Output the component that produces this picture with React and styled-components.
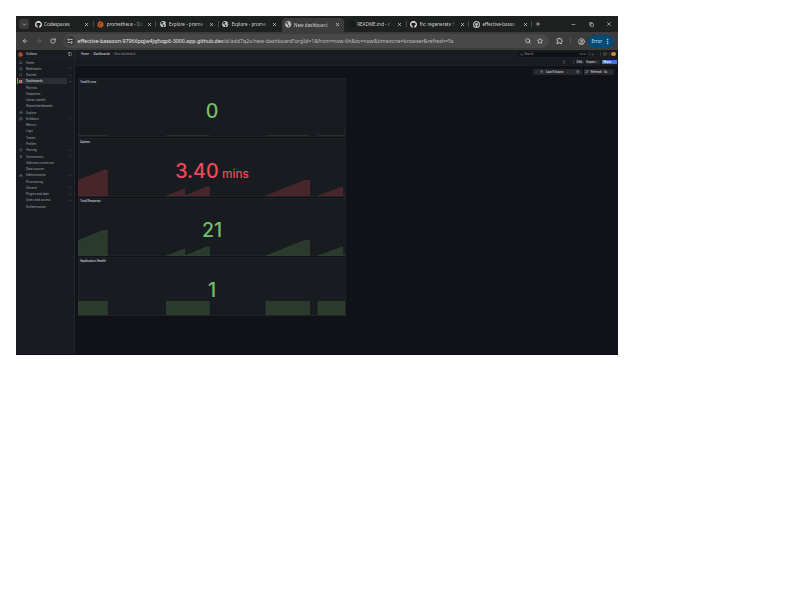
import React from 'react';
import styled, { createGlobalStyle } from 'styled-components';
import {
  ChevronDown, ChevronRight, ChevronLeft, ChevronUp, X, Plus, Minus, Copy, ArrowLeft, ArrowRight, RotateCw,
  Search, Star, CircleUser, EllipsisVertical, House, Bookmark, LayoutGrid, Compass,
  Bell, Settings, Plug, Clock, ZoomOut, RefreshCw, PanelLeft, Layers, CircleHelp,
} from 'lucide-react';
import { FaGithub, FaGlobeAmericas } from 'react-icons/fa';
import { MdOutlineExtension } from 'react-icons/md';

const Global = createGlobalStyle`
  * { box-sizing: border-box; }
  body { margin: 0; background: #fff; }
  svg { flex: none; display: block; }
`;

const Window = styled.div`
  width: 602px;
  height: 339px;
  margin: 16px;
  display: flex;
  flex-direction: column;
  background: #111217;
  overflow: hidden;
  font-family: Inter, sans-serif;
`;

/* Browser chrome */
const TabStrip = styled.div`
  height: 16px;
  flex: none;
  display: flex;
  align-items: center;
  background: #1f2120;
  color: #d4d4d4;
  font: 4.6px/8px "Noto Sans", sans-serif;
`;
const TabMenu = styled.div`
  width: 10px;
  height: 10px;
  margin: 0 2px 0 3px;
  border-radius: 3px;
  background: #3a3b3a;
  display: grid;
  place-items: center;
`;
const Tab = styled.div`
  width: 62.65px;
  height: ${(p) => (p.$active ? 14 : 12)}px;
  align-self: ${(p) => (p.$active ? 'flex-end' : 'center')};
  padding: 0 4.5px ${(p) => (p.$active ? 1 : 0)}px 3.5px;
  display: flex;
  align-items: center;
  gap: 2.5px;
  flex: none;
  border-radius: 4px 4px 0 0;
  background: ${(p) => (p.$active ? '#3c3c3c' : 'transparent')};
`;
const TabTitle = styled.span`
  flex: 1;
  min-width: 0;
  overflow: hidden;
  white-space: nowrap;
  mask-image: linear-gradient(90deg, #000 75%, transparent);
`;
const TabDivider = styled.i`
  width: 1px;
  height: 6px;
  margin: 0 0 0 -1px;
  flex: none;
  background: ${(p) => (p.$off ? 'transparent' : '#484948')};
`;
const NewTab = styled.div`
  margin-left: 2.5px;
`;
const RingIcon = styled.span`
  width: 7px;
  height: 7px;
  flex: none;
  border-radius: 50%;
  background: #b9bbbd;
  display: grid;
  place-items: center;
`;
const Controls = styled.div`
  margin-left: auto;
  padding-right: 6px;
  display: flex;
  align-items: center;
  gap: 12.5px;
`;
const Toolbar = styled.div`
  height: 18px;
  flex: none;
  padding: 0 4px 0 5.5px;
  display: flex;
  align-items: center;
  background: #3c3c3c;
  color: #d8d8d8;
`;
const NavIcons = styled.div`
  width: 41px;
  display: flex;
  gap: 8px;
`;
const Address = styled.div`
  width: 486.5px;
  height: 14px;
  padding: 0 6px 0 2px;
  border-radius: 7px;
  background: #484848;
  display: flex;
  align-items: center;
  gap: 6.5px;
`;
const SiteInfo = styled.div`
  width: 10px;
  height: 10px;
  margin-right: -3.5px;
  border-radius: 5px;
  background: #3a3a3a;
  display: grid;
  place-items: center;
`;
const Url = styled.span`
  flex: 1;
  white-space: nowrap;
  color: #bcbcbc;
  font: 5.26px/10px "Noto Sans", sans-serif;
  b { font-weight: 400; color: #ececec; }
`;
const BarEnd = styled.div`
  margin-left: auto;
  display: flex;
  align-items: center;
  gap: 6.5px;
`;
const BarDivider = styled.i`
  width: 1px;
  height: 6px;
  background: #5a5a5a;
`;
const ErrorChip = styled.div`
  height: 13px;
  width: 26px;
  margin-left: -3px;
  border-radius: 7px;
  background: #044a77;
  color: #c2e2f7;
  display: flex;
  align-items: center;
  justify-content: center;
  gap: 1.5px;
  font: 4.5px/8px "Noto Sans", sans-serif;
`;

/* Grafana */
const Workspace = styled.div`
  flex: 1;
  min-height: 0;
  display: flex;
  border-bottom: 1px solid #1a0a16;
`;
const Sidebar = styled.nav`
  width: 59px;
  flex: none;
  background: #181b1f;
  border-right: 1px solid #24262b;
  color: #a8a9af;
  font-size: 2.9px;
`;
const Brand = styled.div`
  height: 8px;
  padding: 0.2px 2px 0;
  display: flex;
  align-items: center;
  gap: 3px;
  box-shadow: inset 0 -0.5px #25272c;
  color: #d0d1d6;
`;
const NavList = styled.div`
  padding-top: 1.4px;
`;
const NavItem = styled.div`
  height: 6.28px;
  width: ${(p) => (p.$active ? 57 : 58)}px;
  margin-left: ${(p) => (p.$active ? 1 : 0)}px;
  padding-left: ${(p) => (p.$active ? 1 : 3)}px;
  border-left: ${(p) => (p.$active ? '1px solid #f0603c' : '0 solid transparent')};
  display: flex;
  align-items: center;
  background: ${(p) => (p.$active ? 'linear-gradient(90deg, #2c2e33 49px, transparent 49px)' : 'transparent')};
  color: ${(p) => (p.$active ? '#e0e0e4' : 'inherit')};
`;
const NavIcon = styled.span`
  width: 7px;
  flex: none;
  color: ${(p) => (p.$active ? '#fff' : '#a0a1a7')};
`;
const NavLabel = styled.span`
  width: ${(p) => (p.$brand ? 39.3 : 43.3)}px;
  flex: none;
  white-space: nowrap;
  line-height: 6px;
`;
const Main = styled.main`
  flex: 1;
  min-width: 0;
`;
const TopRow = styled.div`
  height: 8px;
  padding: 0.2px ${(p) => p.$right}px 0 6px;
  display: flex;
  align-items: center;
  background: #181b1f;
  box-shadow: inset 0 -0.6px #25272c;
  color: #909198;
  font-size: 2.8px;
`;
const Crumbs = styled.div`
  display: flex;
  align-items: center;
  gap: 1px;
  b { font-weight: 600; color: #c7c8ce; }
`;
const TopTools = styled.div`
  margin-left: auto;
  display: flex;
  align-items: center;
  gap: ${(p) => p.$gap}px;
`;
const SearchBox = styled.div`
  width: 68px;
  height: 5px;
  padding: 0 1px;
  background: #101116;
  display: flex;
  align-items: center;
  gap: 1px;
  span:last-child { margin-left: auto; font-size: 2.4px; }
`;
const Avatar = styled.i`
  width: 4.6px;
  height: 4.6px;
  border-radius: 3px;
  background: radial-gradient(#c98a4a 30%, #c9781c);
`;
const Divider = styled.i`
  width: 0.5px;
  height: 4px;
  margin-left: ${(p) => p.$gap || 0}px;
  background: #34363c;
`;
const Button = styled.div`
  width: ${(p) => p.$w}px;
  height: ${(p) => p.$h || 4.8}px;
  flex: none;
  display: flex;
  align-items: center;
  justify-content: space-evenly;
  white-space: nowrap;
  font-size: 2.9px;
  font-weight: 600;
  color: ${(p) => (p.$primary ? '#fff' : '#d0d1d8')};
  background: ${(p) => (p.$primary ? '#3d71d9' : '#25272c')};
`;
const TimeBar = styled.div`
  height: 12.4px;
  padding: 0 4.5px 0 0;
  display: flex;
  align-items: center;
  justify-content: flex-end;
  gap: 1.5px;
`;
const Panels = styled.div`
  width: 268px;
  margin-left: 3px;
  display: flex;
  flex-direction: column;
  gap: 1.2px;
`;
const Panel = styled.section`
  height: 58.5px;
  padding-bottom: 0.6px;
  display: grid;
  grid-template: 6px 1fr / 1fr;
  background: #181b1f;
  box-shadow: inset 0 0 0 0.6px #26282d;
  overflow: hidden;
`;
const PanelTitle = styled.h2`
  margin: 0;
  padding: 0.6px 0 0 2px;
  font-size: 2.9px;
  line-height: 6px;
  font-weight: 600;
  color: #ccccdc;
`;
const PanelBody = styled.div`
  display: grid;
  grid-template: 100% / 100%;
  > * { grid-area: 1 / 1; }
`;
const Spark = styled.svg`
  width: 267px;
  height: 27px;
  margin-left: 0.3px;
  align-self: end;
  fill: ${(p) => (p.$red ? '#46262b' : '#2a3a2d')};
  stroke: ${(p) => (p.$red ? '#64303a' : '#37503a')};
  stroke-width: 0.5;
`;
const Value = styled.div`
  z-index: 1;
  align-self: center;
  display: flex;
  align-items: baseline;
  justify-content: center;
  gap: 3.5px;
  font-size: 19.6px;
  line-height: 22px;
  font-weight: 500;
  padding-top: ${(p) => (p.$red ? 1.6 : 0.8)}px;
  color: ${(p) => (p.$red ? '#f2495c' : '#73bf69')};
  small { font-size: 11.7px; line-height: 12px; }
`;

const GrafanaMark = ({ size }) => (
  <svg width={size} height={size} viewBox="0 0 24 24">
    <path d="M12 1l3 3 4-1 1 4 3 3-2 3 1 5-4 1-3 4-4-2-5 1-1-4-4-3 2-4-1-4 4-2 2-4z" fill="#ef6327" />
    <path d="M17 12a5 5 0 1 0-5 5c3 0 4-3 2-4" fill="none" stroke="#2b211d" strokeWidth="3" />
  </svg>
);
const SiteSettings = () => (
  <svg width="6" height="6" viewBox="0 0 12 12" fill="none" stroke="#dcdcdc" strokeWidth="1.5">
    <circle cx="3" cy="3" r="1.5" /><path d="M6 3h5M1 9h5" /><circle cx="9" cy="9" r="1.5" />
  </svg>
);

const github = <FaGithub size={7} color="#f5f5f5" />;
const globe = <FaGlobeAmericas size={6.5} color="#c5c8cb" />;
const tabs = [
  ['Codespaces', github],
  ['prometheus - Da', <GrafanaMark size={7} />],
  ['Explore - prome', globe],
  ['Explore - prome', globe],
  ['New dashboard', globe, true],
  ['README.md - c', <FaGithub size={7} color="#161817" />],
  ['fix: regenerate f', github],
  ['effective-basso', <RingIcon><FaGithub size={5} color="#2b2d2d" /></RingIcon>],
];

const nav = [
  ['Home', House], ['Bookmarks', Bookmark, 1], ['Starred', Star, 1], ['Dashboards', LayoutGrid, 2],
  ['Playlists'], ['Snapshots'], ['Library panels'], ['Shared dashboards'],
  ['Explore', Compass], ['Drilldown', Layers, 2], ['Metrics'], ['Logs'], ['Traces'], ['Profiles'],
  ['Alerting', Bell, 1], ['Connections', Plug, 2], ['Add new connection'], ['Data sources'],
  ['Administration', Settings, 2], ['Provisioning'], ['General', null, 1], ['Plugins and data', null, 1],
  ['Users and access', null, 1], ['Authentication'],
];

const ramps = 'M0 11.5L26 1.3H29.3V27H0ZM88.4 27L106.7 20V27L128.5 18H131.3V27ZM188 27L227 11.3H231.5V27ZM240 27L263.7 18.2H264.7V26.6H267V27Z';
const blocks = 'M0 13.6H29.3V27H0ZM88.5 13.6H131.3V27H88.5ZM188 13.6H231.5V27H188ZM240 13.6H267V27H240Z';
const flat = 'M0 26.6H29.3M88.5 26.6H131.3M188 26.6H231.5M240 26.6H267';
const panels = [
  { title: 'Total Errors', value: '0', path: flat },
  { title: 'Uptime', value: '3.40', unit: 'mins', red: true, path: ramps },
  { title: 'Total Requests', value: '21', path: ramps },
  { title: 'Application Health', value: '1', path: blocks },
];

export default function App() {
  return (
    <>
      <Global />
      <Window>
        <TabStrip>
          <TabMenu><ChevronDown size={5} strokeWidth={3} /></TabMenu>
          {tabs.map(([title, icon, active], i) => (
            <React.Fragment key={i}>
              <Tab $active={active}>
                {icon}
                <TabTitle>{title}</TabTitle>
                <X size={5} strokeWidth={3.4} />
              </Tab>
              <TabDivider $off={i === 3 || i === 4} />
            </React.Fragment>
          ))}
          <NewTab><Plus size={6} strokeWidth={2.6} /></NewTab>
          <Controls>
            <Minus size={5} strokeWidth={2.8} /><Copy size={5} strokeWidth={2.8} /><X size={6} strokeWidth={2.4} />
          </Controls>
        </TabStrip>
        <Toolbar>
          <NavIcons>
            <ArrowLeft size={6} strokeWidth={2.8} /><ArrowRight size={6} color="#828282" /><RotateCw size={6} strokeWidth={2.8} />
          </NavIcons>
          <Address>
            <SiteInfo><SiteSettings /></SiteInfo>
            <Url><b>effective-bassoon-97966pqjw4jqfxqp6-3000.app.github.dev</b>/d/add7q2x/new-dashboard?orgId=1&amp;from=now-6h&amp;to=now&amp;timezone=browser&amp;refresh=5s</Url>
            <Search size={6} strokeWidth={3} />
            <Star size={6} strokeWidth={3} />
          </Address>
          <BarEnd>
            <MdOutlineExtension size={7.5} /><BarDivider /><CircleUser size={7} strokeWidth={2.4} />
            <ErrorChip>Error<EllipsisVertical size={7} strokeWidth={3} /></ErrorChip>
          </BarEnd>
        </Toolbar>
        <Workspace>
          <Sidebar>
            <Brand>
              <GrafanaMark size={5} />
              <NavLabel $brand>Grafana</NavLabel>
              <PanelLeft size={4} />
            </Brand>
            <NavList>
              {nav.map(([label, Icon, chevron]) => {
                const active = label === 'Dashboards';
                return (
                  <NavItem key={label} $active={active}>
                    <NavIcon $active={active}>{Icon && <Icon size={3.6} />}</NavIcon>
                    <NavLabel>{label}</NavLabel>
                    {chevron === 1 && <ChevronDown size={3} />}
                    {chevron === 2 && <ChevronUp size={3} />}
                  </NavItem>
                );
              })}
            </NavList>
          </Sidebar>
          <Main>
            <TopRow $right={2.5}>
              <Crumbs>
                <b>Home</b><ChevronRight size={2.5} /><b>Dashboards</b><ChevronRight size={2.5} /><span>New dashboard</span>
              </Crumbs>
              <TopTools $gap={1.9}>
                <SearchBox><Search size={3} /><span>Search...</span><span>ctrl+k</span></SearchBox>
                <Divider /><Plus size={3} /><ChevronDown size={2} /><Divider />
                <CircleHelp size={4} /><Divider /><Avatar />
              </TopTools>
            </TopRow>
            <TopRow $right={1}>
              <TopTools $gap={2}>
                <Star size={4} />
                <Divider $gap={5} />
                <Button $w={8}>Edit</Button>
                <Button $w={14}>Export<ChevronDown size={2.5} /></Button>
                <Button $w={15.5} $primary>Share<ChevronDown size={2.5} /></Button>
              </TopTools>
            </TopRow>
            <TimeBar>
              <Button $w={49.5} $h={6}>
                <ChevronLeft size={2.5} /><Clock size={3.4} />Last 6 hours<ChevronDown size={2.5} />
                <ChevronRight size={2.5} /><ZoomOut size={3.6} />
              </Button>
              <Button $w={30} $h={6}><RefreshCw size={3.4} />Refresh<span>5s</span><ChevronDown size={2.5} /></Button>
            </TimeBar>
            <Panels>
              {panels.map((p) => (
                <Panel key={p.title}>
                  <PanelTitle>{p.title}</PanelTitle>
                  <PanelBody>
                    <Spark $red={p.red} viewBox="0 0 267 27"><path d={p.path} /></Spark>
                    <Value $red={p.red}>{p.value}{p.unit && <small>{p.unit}</small>}</Value>
                  </PanelBody>
                </Panel>
              ))}
            </Panels>
          </Main>
        </Workspace>
      </Window>
    </>
  );
}
